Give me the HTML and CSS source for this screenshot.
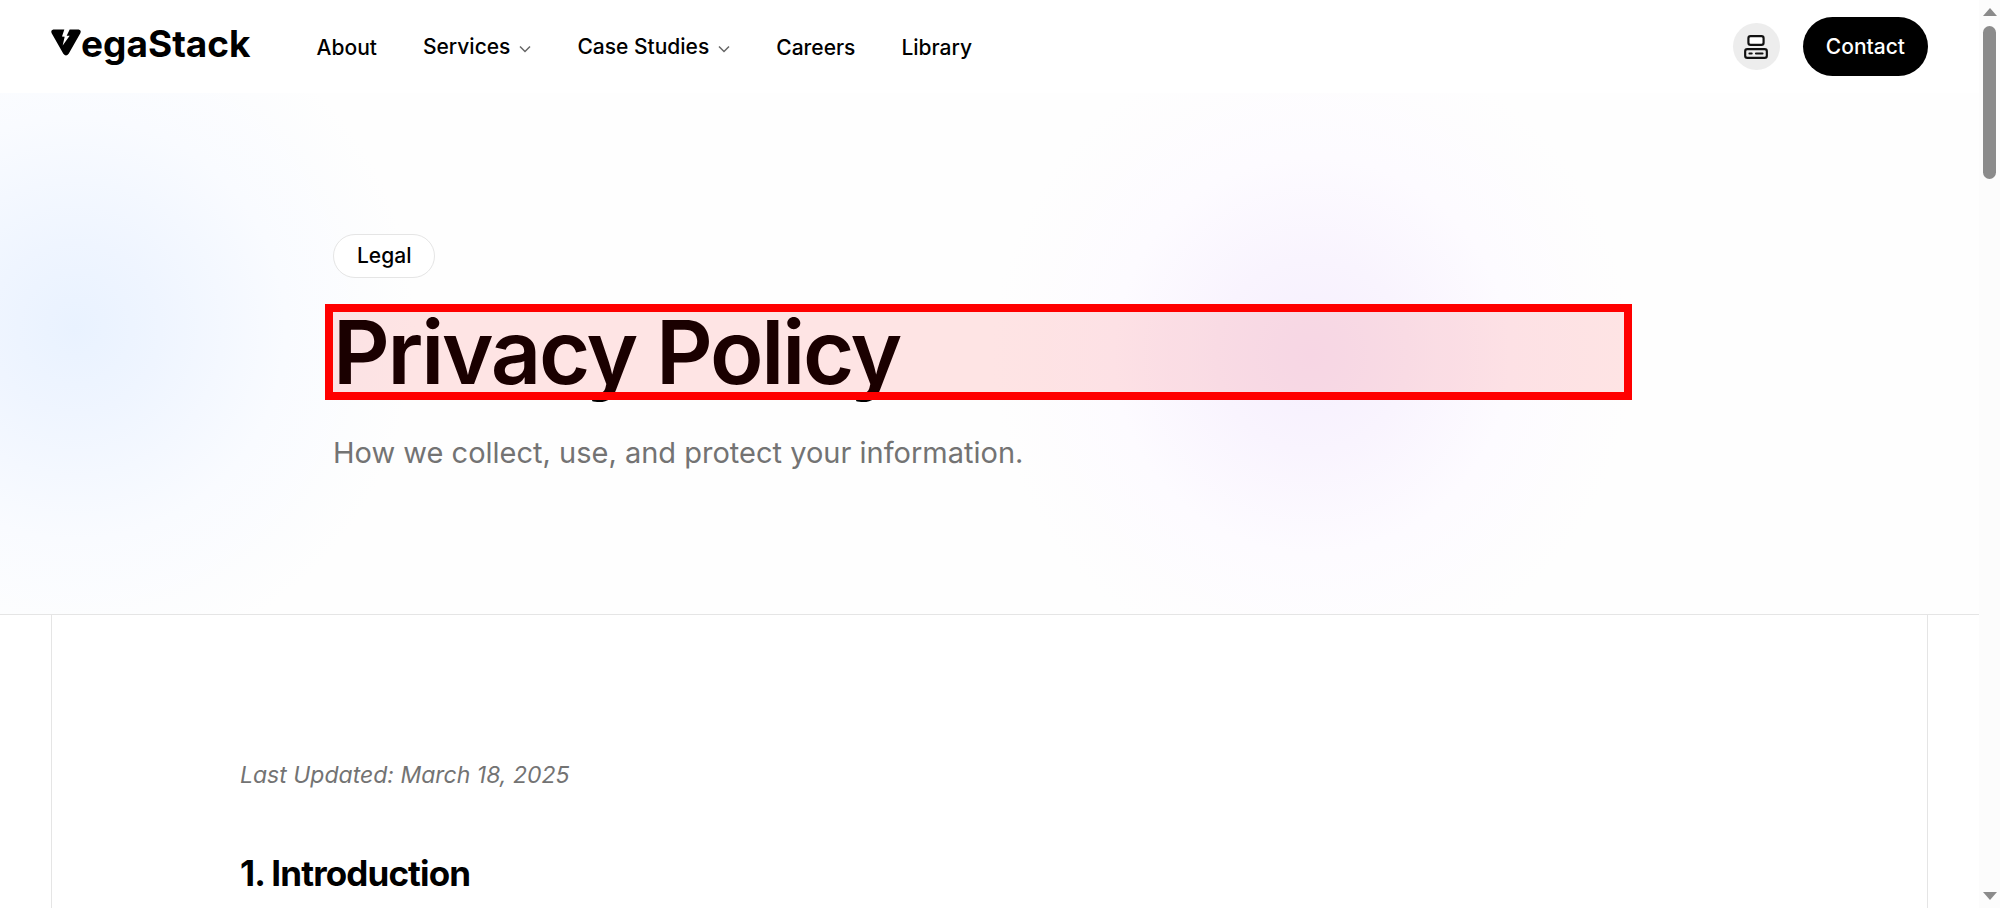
FILE: index.html
```html
<!DOCTYPE html>
<html lang="en">
<head>
<meta charset="utf-8">
<meta name="viewport" content="width=device-width, initial-scale=1">
<title>Privacy Policy | VegaStack</title>
<link rel="stylesheet" href="styles.css">
</head>
<body>
<div class="page">
  <header class="header">
    <a class="logo" href="#" aria-label="VegaStack">
      <svg class="logo-mark" viewBox="0 0 90 80" aria-hidden="true"><path fill="#000" d="M7 1H40L33 22 41 23 35 49 56 20H47L56 1H83Q92 3 88 12L53 74Q45 84 37 74L2 12Q-2 3 7 1Z"/></svg>
      <span class="logo-text">egaStack</span>
    </a>
    <nav class="nav" aria-label="Main">
      <a class="nav-link" href="#">About</a>
      <button class="nav-link nav-menu" type="button">Services <svg class="chevron" viewBox="0 0 12 12" aria-hidden="true"><path d="M1 3.5 6 8.5l5-5"/></svg></button>
      <button class="nav-link nav-menu" type="button">Case Studies <svg class="chevron" viewBox="0 0 12 12" aria-hidden="true"><path d="M1 3.5 6 8.5l5-5"/></svg></button>
      <a class="nav-link" href="#">Careers</a>
      <a class="nav-link" href="#">Library</a>
    </nav>
    <div class="actions">
      <button class="theme" type="button" aria-label="Use system theme">
        <svg class="theme-icon" viewBox="0 0 24 24" aria-hidden="true"><rect x="5" y="2" width="14" height="8" rx="2"/><rect x="2" y="14" width="20" height="8" rx="2"/><path d="M6 18h2M12 18h6"/></svg>
      </button>
      <a class="contact" href="#">Contact</a>
    </div>
  </header>
  <section class="hero">
    <div class="hero-inner">
      <span class="tag">Legal</span>
      <h1 class="title">Privacy Policy</h1>
      <p class="subtitle">How we collect, use, and protect your information.</p>
    </div>
  </section>
  <main class="content">
    <p class="updated">Last Updated: March 18, 2025</p>
    <h2 class="heading">1. Introduction</h2>
  </main>
</div>
<div class="scrollbar" aria-hidden="true">
  <svg class="arrow" viewBox="0 0 14 8"><path d="M0 8 7 0l7 8z"/></svg>
  <div class="thumb"></div>
  <svg class="arrow arrow-down" viewBox="0 0 14 8"><path d="M0 0h14L7 8z"/></svg>
</div>
</body>
</html>
```
FILE: styles.css
```css
* { box-sizing: border-box; }

body {
  margin: 0;
  height: 100vh;
  overflow: hidden;
  display: grid;
  grid-template-columns: 1fr 21px;
  font-family: Inter, "Liberation Sans", sans-serif;
  font-size: 21px;
  color: #000;
  background: #fff;
}

h1, h2, p { margin: 0; }
a { color: inherit; text-decoration: none; }
button { border: 0; padding: 0; font: inherit; color: inherit; background: none; }

.page { height: 100vh; min-width: 0; display: flex; flex-direction: column; }

.header {
  height: 93px;
  flex: none;
  display: flex;
  align-items: center;
  padding: 0 51px;
}

.logo { display: flex; align-items: center; }
.logo-mark { width: 30px; height: 27px; margin-bottom: 8px; }
.logo-text { font-size: 37px; font-weight: 700; line-height: 44px; margin-bottom: 6px; }

.nav { display: flex; align-items: center; gap: 46px; margin-left: 66px; }
.nav-link { font-weight: 500; line-height: 28px; }
a.nav-link { padding-top: 2px; }
.nav-menu { display: flex; align-items: center; gap: 9px; }
.chevron { width: 12px; height: 12px; margin-top: 4px; fill: none; stroke: #666; stroke-width: 1.5; }

.actions { margin-left: auto; display: flex; align-items: center; gap: 23px; }
.theme {
  width: 47px;
  height: 47px;
  border-radius: 50%;
  background: #ededed;
  display: grid;
  place-items: center;
}
.theme-icon { width: 26px; height: 26px; fill: none; stroke: #111; stroke-width: 2; stroke-linecap: round; }
.theme-icon rect:first-child { fill: #fff; }
.contact {
  padding: 15px 23px;
  border-radius: 30px;
  line-height: 29px;
  font-weight: 500;
  color: #fff;
  background: #000;
}

.hero {
  flex: none;
  padding: 141px 333px;
  border-bottom: 1px solid #e5e5e5;
  background:
    radial-gradient(circle 340px at 75px 235px, #e9f2ff, #eff5ff 25%, #f9fbff 62%, transparent),
    radial-gradient(circle 320px at 1312px 262px, #f6effe, #f9f4fe 30%, #fdfbff 62%, transparent),
    #fefefe;
}
.hero-inner { max-width: 1291px; display: flex; flex-direction: column; align-items: flex-start; }
.tag {
  padding: 7px 23px;
  border: 1px solid #e5e5e5;
  border-radius: 22px;
  line-height: 28px;
  font-weight: 500;
  background: #fff;
}
.title {
  position: relative;
  width: 100%;
  margin-top: 34px;
  font-size: 88px;
  line-height: 80px;
  font-weight: 600;
  letter-spacing: -0.025em;
}
.title::after {
  content: "";
  position: absolute;
  inset: -8px;
  border: 8px solid #f00;
  background: rgba(255, 0, 0, 0.1);
}
.subtitle { margin-top: 41px; font-size: 29px; line-height: 40px; color: #737373; }

.content {
  flex: 1;
  margin: 0 51px;
  padding: 140px 188px 0;
  border: solid #e5e5e5;
  border-width: 0 1px;
}
.updated { font-size: 23px; line-height: 40px; font-style: italic; color: #737373; }
.heading { margin-top: 57px; font-size: 35px; line-height: 42px; font-weight: 700; letter-spacing: -0.025em; }

.scrollbar {
  display: flex;
  flex-direction: column;
  align-items: center;
  padding: 8px 0;
  background: #fcfcfc;
}
.arrow { width: 14px; height: 8px; fill: #8b8b8b; }
.arrow-down { margin-top: auto; }
.thumb { width: 13px; height: 153px; margin-top: 10px; border-radius: 7px; background: #8b8b8b; }
```
